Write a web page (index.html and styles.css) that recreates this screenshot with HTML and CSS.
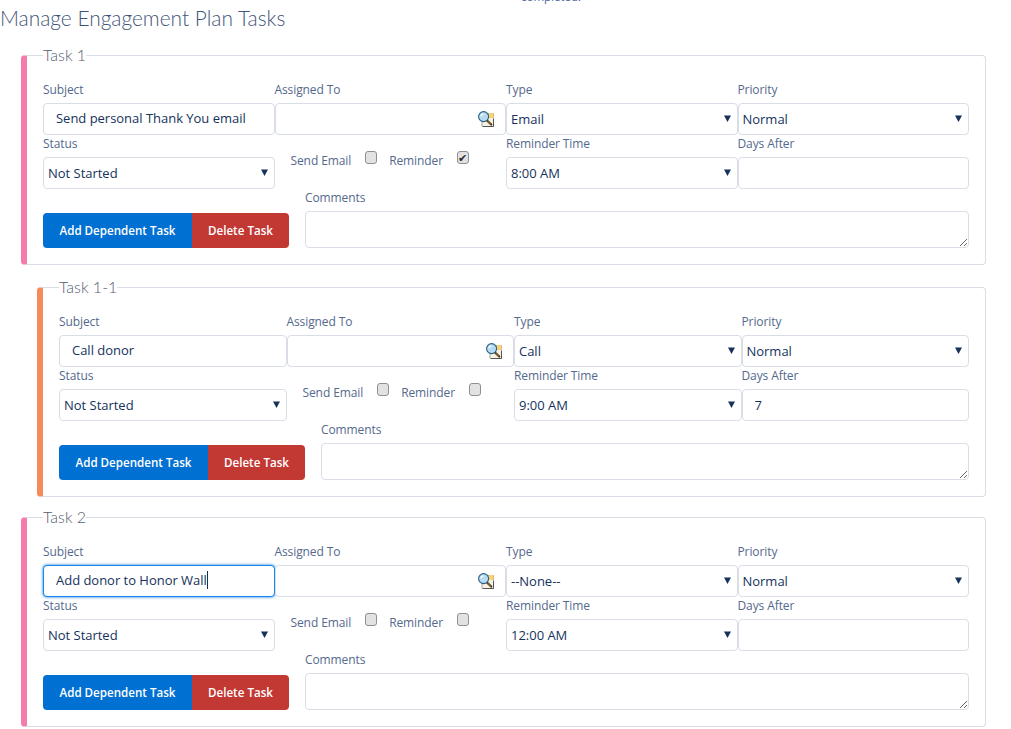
FILE: index.html
```html
<!DOCTYPE html>
<html lang="en">
<head>
<meta charset="utf-8">
<title>Manage Engagement Plan Tasks</title>
<link rel="stylesheet" href="styles.css">
</head>
<body>
<svg class="sprite" width="0" height="0" aria-hidden="true">
  <defs>
    <symbol id="lookup" viewBox="0 0 16 16">
      <path d="M4 2.5H15.5V15.5H4z" fill="#f6f3e6" stroke="#a5a59a" stroke-width="1"/>
      <path d="M11 2h4.5v5H11z" fill="#fbd271"/>
      <path d="M5 15.5H15.5V8" fill="none" stroke="#555" stroke-width="1"/>
      <path d="M9 9.5l4.2 4" stroke="#3a2a14" stroke-width="2.2" stroke-linecap="round"/>
      <path d="M9.5 10l3.5 3.4" stroke="#c9902f" stroke-width="1"/>
      <circle cx="5.6" cy="5.6" r="5" fill="#b5dcf3" stroke="#2e5f80" stroke-width="1.1"/>
      <path d="M3 5.4a2.8 2.8 0 0 1 2.6-2.6" fill="none" stroke="#fff" stroke-width="1.2"/>
    </symbol>
    <symbol id="arrow" viewBox="0 0 7 7">
      <path d="M0 .5h7L3.5 7z" fill="#16325c"/>
    </symbol>
  </defs>
</svg>
<div class="clipped-note">completed.</div>
<h1 class="page-title">Manage Engagement Plan Tasks</h1>

<fieldset class="task">
  <legend>Task 1</legend>
  <div class="task-grid">
    <label class="field"><span class="lbl">Subject</span><input class="ctl text" type="text" value="Send personal Thank You email"></label>
    <label class="field"><span class="lbl">Assigned To</span><span class="wrap"><input class="ctl" type="text"><svg class="lookup"><use href="#lookup"/></svg></span></label>
    <label class="field"><span class="lbl">Type</span><span class="wrap"><select class="ctl sel"><option>Email</option></select><svg class="arrow"><use href="#arrow"/></svg></span></label>
    <label class="field"><span class="lbl">Priority</span><span class="wrap"><select class="ctl sel"><option>Normal</option></select><svg class="arrow"><use href="#arrow"/></svg></span></label>
    <label class="field"><span class="lbl">Status</span><span class="wrap"><select class="ctl sel"><option>Not Started</option></select><svg class="arrow"><use href="#arrow"/></svg></span></label>
    <div class="checks">
      <label class="check"><span class="lbl">Send Email</span><input type="checkbox"></label>
      <label class="check"><span class="lbl">Reminder</span><input type="checkbox" checked></label>
    </div>
    <label class="field"><span class="lbl">Reminder Time</span><span class="wrap"><select class="ctl sel"><option>8:00 AM</option></select><svg class="arrow"><use href="#arrow"/></svg></span></label>
    <label class="field"><span class="lbl">Days After</span><input class="ctl text" type="text"></label>
  </div>
  <div class="task-foot">
    <div class="actions"><button class="btn add" type="button">Add Dependent Task</button><button class="btn del" type="button">Delete Task</button></div>
    <label class="comments"><span class="lbl">Comments</span><textarea class="ctl area"></textarea></label>
  </div>
</fieldset>

<fieldset class="task task-child">
  <legend>Task 1-1</legend>
  <div class="task-grid">
    <label class="field"><span class="lbl">Subject</span><input class="ctl text" type="text" value="Call donor"></label>
    <label class="field"><span class="lbl">Assigned To</span><span class="wrap"><input class="ctl" type="text"><svg class="lookup"><use href="#lookup"/></svg></span></label>
    <label class="field"><span class="lbl">Type</span><span class="wrap"><select class="ctl sel"><option>Call</option></select><svg class="arrow"><use href="#arrow"/></svg></span></label>
    <label class="field"><span class="lbl">Priority</span><span class="wrap"><select class="ctl sel"><option>Normal</option></select><svg class="arrow"><use href="#arrow"/></svg></span></label>
    <label class="field"><span class="lbl">Status</span><span class="wrap"><select class="ctl sel"><option>Not Started</option></select><svg class="arrow"><use href="#arrow"/></svg></span></label>
    <div class="checks">
      <label class="check"><span class="lbl">Send Email</span><input type="checkbox"></label>
      <label class="check"><span class="lbl">Reminder</span><input type="checkbox"></label>
    </div>
    <label class="field"><span class="lbl">Reminder Time</span><span class="wrap"><select class="ctl sel"><option>9:00 AM</option></select><svg class="arrow"><use href="#arrow"/></svg></span></label>
    <label class="field"><span class="lbl">Days After</span><input class="ctl text" type="text" value="7"></label>
  </div>
  <div class="task-foot">
    <div class="actions"><button class="btn add" type="button">Add Dependent Task</button><button class="btn del" type="button">Delete Task</button></div>
    <label class="comments"><span class="lbl">Comments</span><textarea class="ctl area"></textarea></label>
  </div>
</fieldset>

<fieldset class="task task-last">
  <legend>Task 2</legend>
  <div class="task-grid">
    <label class="field"><span class="lbl">Subject</span><span class="wrap"><input class="ctl text focused" type="text" value="Add donor to Honor Wall"><span class="caret"></span></span></label>
    <label class="field"><span class="lbl">Assigned To</span><span class="wrap"><input class="ctl" type="text"><svg class="lookup"><use href="#lookup"/></svg></span></label>
    <label class="field"><span class="lbl">Type</span><span class="wrap"><select class="ctl sel"><option>--None--</option></select><svg class="arrow"><use href="#arrow"/></svg></span></label>
    <label class="field"><span class="lbl">Priority</span><span class="wrap"><select class="ctl sel"><option>Normal</option></select><svg class="arrow"><use href="#arrow"/></svg></span></label>
    <label class="field"><span class="lbl">Status</span><span class="wrap"><select class="ctl sel"><option>Not Started</option></select><svg class="arrow"><use href="#arrow"/></svg></span></label>
    <div class="checks">
      <label class="check"><span class="lbl">Send Email</span><input type="checkbox"></label>
      <label class="check"><span class="lbl">Reminder</span><input type="checkbox"></label>
    </div>
    <label class="field"><span class="lbl">Reminder Time</span><span class="wrap"><select class="ctl sel"><option>12:00 AM</option></select><svg class="arrow"><use href="#arrow"/></svg></span></label>
    <label class="field"><span class="lbl">Days After</span><input class="ctl text" type="text"></label>
  </div>
  <div class="task-foot">
    <div class="actions"><button class="btn add" type="button">Add Dependent Task</button><button class="btn del" type="button">Delete Task</button></div>
    <label class="comments"><span class="lbl">Comments</span><textarea class="ctl area"></textarea></label>
  </div>
</fieldset>
</body>
</html>
```

FILE: styles.css
```css
* { box-sizing: border-box; }
html, body { margin: 0; padding: 0; background: #fff; overflow: hidden; }
body { height: 729px; font-family: "Open Sans", "Liberation Sans", sans-serif; color: #16325c; font-size: 13px; position: relative; }
.sprite { position: absolute; }
.clipped-note { position: absolute; left: 521px; top: -10px; font-size: 11.5px; line-height: 14px; color: #3f5f96; }
.page-title { margin: 0; padding: 5px 0 0; height: 45px; font-size: 20.9px; line-height: 25px; font-weight: 300; color: #3f5577; font-family: Lato, "Open Sans", sans-serif; }
.task { display: block; min-width: 0; margin: 0 25px 0 21px; padding: 0 16px 16px; height: 220px; border: 1px solid #d8dde6; border-left: 6px solid #f47cab; border-radius: 4px; }
.task + .task { margin-top: 12px; }
.task + .task-last { margin-top: 10px; }
.task-child { margin-left: 37px; border-left-color: #f58b5b; }
.task legend { padding: 0; margin: 0; font-size: 16px; line-height: 20px; font-weight: 300; color: #54606f; font-family: Lato, "Open Sans", sans-serif; }
.task-grid { display: grid; grid-template-columns: repeat(4, 1fr); margin-top: 16px; }
.task-grid > .field:first-child .text { padding-bottom: 2px; }
.field { display: block; min-width: 0; }
.lbl { display: block; height: 22px; font-size: 12px; line-height: 18px; letter-spacing: -.1px; color: #54698d; }
.wrap { display: block; position: relative; }
.ctl { display: block; width: 100%; height: 32px; margin: 0; border: 1px solid #d8dde6; border-radius: 4px; background: #fff; color: #16325c; font: inherit; font-size: 13px; letter-spacing: -.02px; outline: 0; }
.text { padding: 0 12px; }
.sel { appearance: none; -webkit-appearance: none; padding: 0 20px 0 4px; }
.focused { border-color: #1589ee; box-shadow: 0 0 3px #0070d2; }
.caret { position: absolute; left: 164px; top: 6px; width: 1px; height: 18px; background: #16325c; }
.lookup { position: absolute; right: 12px; top: 8px; width: 16px; height: 16px; }
.arrow { position: absolute; right: 7px; top: 12px; width: 7px; height: 7px; }
.checks { display: flex; align-items: flex-start; gap: 12px; padding: 16px 0 0 16px; }
.check { display: flex; align-items: flex-start; gap: 14px; }
.check .lbl { height: 20px; line-height: 20px; }
.check input { appearance: none; -webkit-appearance: none; width: 12px; height: 13px; margin: 0; border: 1px solid #8f8f8f; border-radius: 3px; background: #e2e2e2; position: relative; }
.check input:checked::after { content: "\2714"; position: absolute; left: 0; top: -1px; font-size: 11px; line-height: 14px; color: #2b2b2b; }
.task-foot { display: flex; align-items: flex-end; gap: 16px; }
.actions { display: flex; flex: none; }
.btn { height: 35px; border: 0; color: #fff; font: inherit; font-size: 11.6px; font-weight: 600; padding: 0; }
.add { width: 149px; background: #0070d2; border-radius: 4px 0 0 4px; }
.del { width: 97px; background: #c23934; border-radius: 0 4px 4px 0; }
.comments { display: block; flex: 1; min-width: 0; }
.area { height: 37px; resize: vertical; padding: 4px 12px; }
```
